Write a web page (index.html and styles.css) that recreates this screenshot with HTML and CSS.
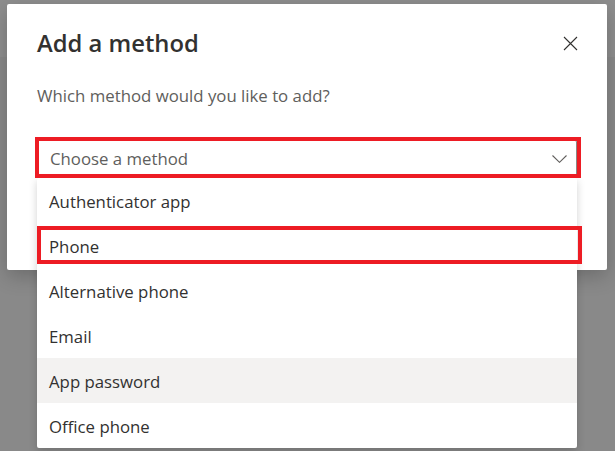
FILE: index.html
```html
<!DOCTYPE html>
<html lang="en">
<head>
    <meta charset="UTF-8">
    <meta name="viewport" content="width=device-width, initial-scale=1.0">
    <title>Add a method</title>
    <link rel="stylesheet" href="styles.css">
</head>
<body>

<div class="page">
    <div class="page-header"></div>
    <div class="page-body"></div>
</div>

<div class="modal">
    <div class="modal-head">
        <h1 class="modal-title">Add a method</h1>
        <button class="close-button" aria-label="Close">
            <svg width="15" height="15" viewBox="0 0 15 15">
                <path d="M1 1 L14 14 M14 1 L1 14" stroke="#323130" stroke-width="1.1" fill="none"/>
            </svg>
        </button>
    </div>

    <p class="modal-text">Which method would you like to add?</p>

    <div class="select">
        <div class="select-field">
            <span class="placeholder">Choose a method</span>
            <svg class="chevron" width="15" height="8" viewBox="0 0 15 8">
                <path d="M0.5 0.5 L7.5 7.3 L14.5 0.5" stroke="#605e5c" stroke-width="1.1" fill="none"/>
            </svg>
        </div>

        <ul class="options">
            <li class="option">Authenticator app</li>
            <li class="option">Phone</li>
            <li class="option">Alternative phone</li>
            <li class="option">Email</li>
            <li class="option option-hover">App password</li>
            <li class="option">Office phone</li>
        </ul>

        <div class="mark mark-select"></div>
        <div class="mark mark-phone"></div>
    </div>
</div>

</body>
</html>
```

FILE: styles.css
```css
body {
    margin: 0;
    font-family: 'Open Sans', 'Noto Sans', sans-serif;
    background-color: #898989;
    overflow: hidden;
}

.page-header {
    height: 57px;
    background-color: #8e8e8e;
}

.page-body {
    height: 394px;
    background-color: #898989;
}

.modal {
    position: absolute;
    left: 7px;
    top: 4px;
    width: 600px;
    height: 266px;
    box-sizing: border-box;
    padding: 0 30px;
    background-color: #fff;
    border-radius: 2px;
    box-shadow: 0 6px 20px rgba(0, 0, 0, 0.22);
}

.modal-head {
    display: flex;
    align-items: center;
    justify-content: space-between;
    height: 78px;
}

.modal-title {
    margin: 0;
    font-size: 23.8px;
    font-weight: 600;
    color: #323130;
}

.close-button {
    margin-right: -1px;
    padding: 0;
    border: none;
    background: none;
    display: flex;
}

.modal-text {
    margin: 2px 0 0;
    font-size: 16.8px;
    color: #605e5c;
}

.select {
    position: relative;
    margin-top: 33px;
}

.select-field {
    height: 36px;
    display: flex;
    align-items: center;
    justify-content: space-between;
    padding: 1px 9px 0 12px;
    border: 1px solid #8a8886;
    border-radius: 2px;
    box-sizing: border-box;
}

.placeholder {
    font-size: 16.8px;
    color: #605e5c;
}

.options {
    position: absolute;
    top: 38px;
    left: 0;
    right: 0;
    margin: 0;
    padding: 0;
    list-style: none;
    background-color: #fff;
    border-radius: 2px;
    box-shadow: 0 3px 8px rgba(0, 0, 0, 0.18);
}

.option {
    height: 45px;
    display: flex;
    align-items: center;
    padding: 2px 12px 0;
    box-sizing: border-box;
    font-size: 16.8px;
    color: #323130;
}

.option-hover {
    background-color: #f3f2f1;
}

.mark {
    position: absolute;
    border: 4px solid #ed1c24;
    box-sizing: border-box;
}

.mark-select {
    left: -2px;
    top: -3px;
    width: 546px;
    height: 41px;
}

.mark-phone {
    left: 0;
    top: 86px;
    width: 545px;
    height: 38px;
}
```
